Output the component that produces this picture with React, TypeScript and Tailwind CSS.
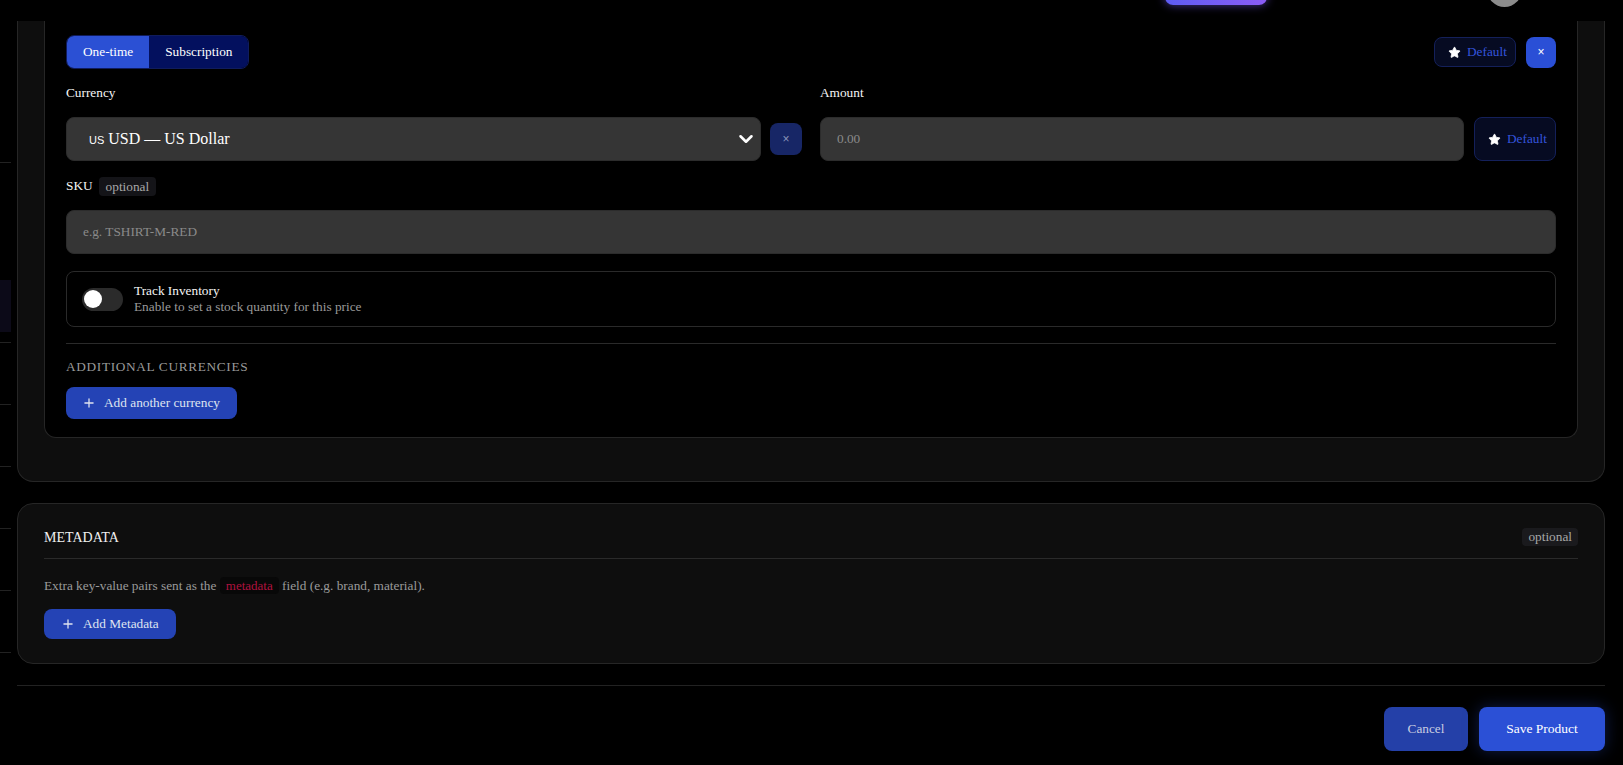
import React from 'react';
import { ChevronDown, Plus, Star } from 'lucide-react';

const Sidebar: React.FC = () => (
  <div className="w-[11px] shrink-0 flex flex-col">
    <div className="h-[163px] border-b border-[#222]" />
    <div className="h-[180px] border-b border-[#222]">
      <div className="mt-[117px] h-[52px] bg-[#0c0a18]" />
    </div>
    {[0, 1, 2, 3, 4].map((i) => (
      <div key={i} className="h-[62px] border-b border-[#222]" />
    ))}
  </div>
);

const DefaultButton: React.FC<{ tall?: boolean }> = ({ tall }) => (
  <button
    className={`flex items-center gap-[6px] pl-[13px] w-[82px] rounded-lg border border-[#14205a] bg-[#060b22] text-[#3454dc] text-[13.3px] ${
      tall ? 'h-[44px]' : 'h-[30px]'
    }`}
  >
    <Star size={13} fill="#ffffff" stroke="#ffffff" strokeWidth={1.5} />
    <span>Default</span>
  </button>
);

const PriceCard: React.FC = () => (
  <div className="bg-black border-x border-b border-[#262626] rounded-b-xl px-[21px] pt-[14px] pb-[18px]">
    {/* Type toggle + actions */}
    <div className="flex items-center justify-between">
      <div className="flex h-[34px] rounded-lg overflow-hidden border border-[#101c5c] text-[13.3px] text-white">
        <button className="px-4 bg-[#2b50d4]">One-time</button>
        <button className="px-4 bg-[#03105e]">Subscription</button>
      </div>
      <div className="flex items-center gap-[10px]">
        <DefaultButton />
        <button className="w-[30px] h-[31px] rounded-lg bg-[#2a4fd6] text-white text-[12px] font-['Liberation_Sans',sans-serif]">
          ×
        </button>
      </div>
    </div>

    {/* Currency / Amount */}
    <div className="grid grid-cols-2 gap-[18px] mt-[14px]">
      <div>
        <div className="h-5 leading-5 text-[13.3px] text-[#f5f5f5]">Currency</div>
        <div className="flex items-center gap-[9px] mt-[14px]">
          <div className="flex-1 h-[44px] flex items-center justify-between pl-[22px] pr-[3px] rounded-lg bg-[#353535] border border-[#2c2c2c] text-white">
            <span className="text-[16px]">
              <span className="font-['Liberation_Sans',sans-serif] text-[11px] uppercase">us</span> USD — US Dollar
            </span>
            <ChevronDown size={22} strokeWidth={2.8} />
          </div>
          <button className="w-8 h-8 rounded-lg bg-[#172666] text-[#8a93b8] text-[12px] font-['Liberation_Sans',sans-serif]">
            ×
          </button>
        </div>
      </div>
      <div>
        <div className="h-5 leading-5 text-[13.3px] text-[#f5f5f5]">Amount</div>
        <div className="flex items-center gap-[10px] mt-[14px]">
          <div className="flex-1 h-[44px] flex items-center px-4 rounded-lg bg-[#353535] border border-[#2c2c2c] text-[13.3px] text-[#8a8a8a]">
            0.00
          </div>
          <DefaultButton tall />
        </div>
      </div>
    </div>

    {/* SKU */}
    <div className="flex items-center gap-[6px] mt-[15px] h-5">
      <span className="text-[13.3px] text-[#f5f5f5]">SKU</span>
      <span className="h-[19px] leading-[19px] px-[7px] rounded bg-[#141418] text-[13.3px] text-[#a8a8a8]">optional</span>
    </div>
    <div className="mt-[14px] h-[44px] flex items-center px-4 rounded-lg bg-[#353535] border border-[#2c2c2c] text-[13.3px] text-[#8a8a8a]">
      e.g. TSHIRT-M-RED
    </div>

    {/* Track inventory */}
    <div className="mt-[17px] h-[56px] flex items-center gap-[11px] px-[15px] rounded-lg border border-[#2a2a2a]">
      <div className="w-[41px] h-[23px] rounded-full bg-[#2b2b2b] flex items-center px-[2px]">
        <div className="w-[18px] h-[18px] rounded-full bg-white" />
      </div>
      <div className="flex flex-col leading-[16px]">
        <span className="text-[13.3px] text-[#f5f5f5]">Track Inventory</span>
        <span className="text-[13.3px] text-[#9a9a9a]">Enable to set a stock quantity for this price</span>
      </div>
    </div>

    <div className="mt-[16px] border-t border-[#2a2a2a]" />

    <div className="mt-[13px] h-5 leading-5 text-[13.3px] tracking-wider text-[#9a9a9a]">ADDITIONAL CURRENCIES</div>
    <button className="mt-[10px] h-[32px] flex items-center gap-2 pl-4 pr-[17px] rounded-lg bg-[#2443b5] text-[13.3px] text-[#dfe3f0]">
      <Plus size={14} strokeWidth={2.2} />
      <span>Add another currency</span>
    </button>
  </div>
);

const MetadataCard: React.FC = () => (
  <div className="mt-[21px] bg-[#0e0e0e] border border-[#262626] rounded-2xl px-[26px] pt-6 pb-6">
    <div className="flex items-center justify-between h-[18px] pb-0">
      <span className="text-[14px] text-[#f0f0f0]">METADATA</span>
      <span className="h-[18px] leading-[18px] px-[6px] rounded bg-[#1a1a1d] text-[13.3px] text-[#a8a8a8]">optional</span>
    </div>
    <div className="mt-[12px] border-t border-[#2a2a2a]" />
    <p className="mt-[17px] h-5 leading-5 text-[13.3px] text-[#9a9a9a]">
      Extra key-value pairs sent as the{' '}
      <code className="font-['Liberation_Serif',serif] px-[6px] py-[1px] rounded bg-[#080808] text-[#b0123f] text-[13px]">metadata</code>{' '}
      field (e.g. brand, material).
    </p>
    <button className="mt-[13px] h-[30px] flex items-center gap-2 pl-[17px] pr-[17px] rounded-lg bg-[#2443b5] text-[13.3px] text-[#dfe3f0]">
      <Plus size={14} strokeWidth={2.2} />
      <span>Add Metadata</span>
    </button>
  </div>
);

export default function App() {
  return (
    <div className="w-full h-[765px] overflow-hidden bg-black flex font-['Liberation_Serif',serif]">
      <Sidebar />
      <div className="flex-1 flex flex-col ml-[6px] mr-[18px]">
        {/* Header (scrolled) */}
        <div className="h-[21px] shrink-0 flex items-start justify-end gap-[220px] pr-[83px]">
          <div className="w-[102px] h-9 -mt-[31px] rounded-lg bg-gradient-to-r from-[#5d5cf3] to-[#8b5cf6] shadow-[0_0_10px_rgba(120,92,246,0.6)]" />
          <div className="w-[35px] h-[35px] -mt-[28px] rounded-full bg-[#8b8b8b]" />
        </div>

        {/* Pricing section */}
        <div className="bg-[#0e0e0e] border-x border-b border-[#262626] rounded-b-2xl px-[26px] pb-[43px]">
          <PriceCard />
        </div>

        <MetadataCard />

        <div className="mt-[21px] border-t border-[#222]" />

        <div className="mt-[21px] flex justify-end gap-[11px]">
          <button className="w-[84px] h-[44px] rounded-lg bg-[#2440a8] text-[13.3px] text-[#c8cde0]">Cancel</button>
          <button className="w-[126px] h-[44px] rounded-lg bg-[#2b50d6] text-[13.5px] text-white shadow-[0_0_16px_rgba(43,80,214,0.35)]">
            Save Product
          </button>
        </div>
      </div>
    </div>
  );
}
